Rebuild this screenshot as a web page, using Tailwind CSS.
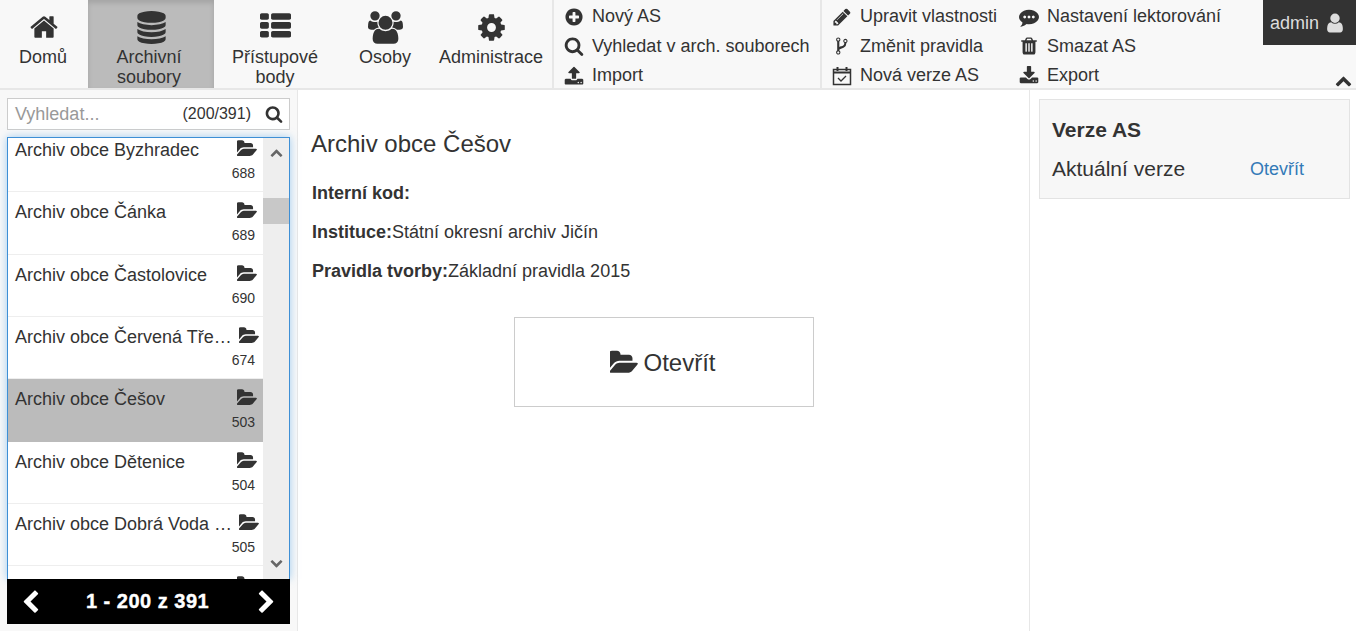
<!DOCTYPE html>
<html lang="cs"><head><meta charset="utf-8">
<script src="https://cdn.jsdelivr.net/npm/@tailwindcss/browser@4"></script>
<title>Archivní soubory</title></head>
<body class="h-[631px] w-[1356px] overflow-hidden bg-white font-['Liberation_Sans',Arial,sans-serif] text-[18px] text-[#333]">
<svg class="hidden">
<symbol id="home" viewBox="0 0 1792 1792"><path d="M1472 992v480q0 26-19 45t-45 19h-384v-384h-256v384h-384q-26 0-45-19t-19-45v-480q0-1 .5-3t.5-3l575-474 575 474q1 2 1 6zm223-69l-62 74q-8 9-21 11h-3q-13 0-21-7l-692-577-692 577q-12 8-24 7-13-2-21-11l-62-74q-8-10-7-23.500t11-21.500l719-599q32-26 76-26t76 26l244 204v-195q0-14 9-23t23-9h192q14 0 23 9t9 23v408l219 182q10 8 11 21.500t-7 23.500z"/></symbol>
<symbol id="database" viewBox="0 0 1792 1792"><path d="M896 768q237 0 443-43t325-127v170q0 69-103 128t-280 93.500-385 34.500-385-34.500-280-93.500-103-128v-170q119 84 325 127t443 43zm0 768q237 0 443-43t325-127v170q0 69-103 128t-280 93.500-385 34.500-385-34.500-280-93.500-103-128v-170q119 84 325 127t443 43zm0-384q237 0 443-43t325-127v170q0 69-103 128t-280 93.500-385 34.500-385-34.500-280-93.500-103-128v-170q119 84 325 127t443 43zm0-1152q208 0 385 34.500t280 93.500 103 128v128q0 69-103 128t-280 93.500-385 34.500-385-34.500-280-93.500-103-128v-128q0-69 103-128t280-93.500 385-34.500z"/></symbol>
<symbol id="thlist" viewBox="0 0 1792 1792"><path d="M512 1248v192q0 40-28 68t-68 28h-320q-40 0-68-28t-28-68v-192q0-40 28-68t68-28h320q40 0 68 28t28 68zm0-512v192q0 40-28 68t-68 28h-320q-40 0-68-28t-28-68v-192q0-40 28-68t68-28h320q40 0 68 28t28 68zm1280 512v192q0 40-28 68t-68 28h-960q-40 0-68-28t-28-68v-192q0-40 28-68t68-28h960q40 0 68 28t28 68zm-1280-1024v192q0 40-28 68t-68 28h-320q-40 0-68-28t-28-68v-192q0-40 28-68t68-28h320q40 0 68 28t28 68zm1280 512v192q0 40-28 68t-68 28h-960q-40 0-68-28t-28-68v-192q0-40 28-68t68-28h960q40 0 68 28t28 68zm0-512v192q0 40-28 68t-68 28h-960q-40 0-68-28t-28-68v-192q0-40 28-68t68-28h960q40 0 68 28t28 68z"/></symbol>
<symbol id="users" viewBox="0 0 1920 1792"><path d="M593 896q-162 5-265 128h-134q-82 0-138-40.500t-56-118.500q0-353 124-353 6 0 43.500 21t97.500 42.500 119 21.500q67 0 133-23-5 37-5 66 0 139 81 256zm1071 637q0 120-73 189.500t-194 69.500h-874q-121 0-194-69.500t-73-189.500q0-53 3.500-103.500t14-109 26.500-108.500 43-97.500 62-81 85.500-53.500 111.500-20q10 0 43 21.500t73 48 107 48 135 21.500 135-21.500 107-48 73-48 43-21.500q61 0 111.500 20t85.500 53.500 62 81 43 97.500 26.500 108.500 14 109 3.500 103.500zm-1024-1277q0 106-75 181t-181 75-181-75-75-181 75-181 181-75 181 75 75 181zm704 384q0 159-112.500 271.500t-271.500 112.500-271.500-112.500-112.500-271.500 112.500-271.500 271.500-112.500 271.500 112.500 112.500 271.500zm576 225q0 78-56 118.500t-138 40.500h-134q-103-123-265-128 81-117 81-256 0-29-5-66 66 23 133 23 59 0 119-21.500t97.500-42.500 43.500-21q124 0 124 353zm-128-609q0 106-75 181t-181 75-181-75-75-181 75-181 181-75 181 75 75 181z"/></symbol>
<symbol id="cog" viewBox="0 0 1792 1792"><path d="M1152 896q0-106-75-181t-181-75-181 75-75 181 75 181 181 75 181-75 75-181zm512-109v222q0 12-8 23t-20 13l-185 28q-19 54-39 91 35 50 107 138 10 12 10 25t-9 23q-27 37-99 108t-94 71q-12 0-26-9l-138-108q-44 23-91 38-16 136-29 186-7 28-36 28h-222q-14 0-24.500-8.500t-11.500-21.500l-28-184q-49-16-90-37l-141 107q-10 9-25 9-14 0-25-11-126-114-165-168-7-10-7-23 0-12 8-23 15-21 51-66.500t54-70.500q-27-50-41-99l-183-27q-13-2-21-12.500t-8-23.500v-222q0-12 8-23t19-13l186-28q14-46 39-92-40-57-107-138-10-12-10-24 0-10 9-23 26-36 98.500-107.500t94.500-71.500q13 0 26 10l138 107q44-23 91-38 16-136 29-186 7-28 36-28h222q14 0 24.500 8.500t11.500 21.500l28 184q49 16 90 37l142-107q9-9 24-9 13 0 25 10 129 119 165 170 7 8 7 22 0 12-8 23-15 21-51 66.500t-54 70.500q26 50 41 98l183 28q13 2 21 12.500t8 23.500z"/></symbol>
<symbol id="plus" viewBox="0 0 1792 1792"><path d="M1344 960v-128q0-26-19-45t-45-19h-256v-256q0-26-19-45t-45-19h-128q-26 0-45 19t-19 45v256h-256q-26 0-45 19t-19 45v128q0 26 19 45t45 19h256v256q0 26 19 45t45 19h128q26 0 45-19t19-45v-256h256q26 0 45-19t19-45zm320-64q0 209-103 385.500t-279.500 279.500-385.500 103-385.500-103-279.500-279.500-103-385.500 103-385.500 279.500-279.500 385.500-103 385.500 103 279.500 279.500 103 385.500z"/></symbol>
<symbol id="search" viewBox="0 0 1792 1792"><path d="M1216 832q0-185-131.500-316.500t-316.500-131.500-316.500 131.500-131.500 316.500 131.500 316.500 316.500 131.500 316.500-131.500 131.500-316.500zm512 832q0 52-38 90t-90 38q-54 0-90-38l-343-342q-179 124-399 124-143 0-273.500-55.500t-225-150-150-225-55.500-273.500 55.500-273.500 150-225 225-150 273.500-55.500 273.500 55.500 225 150 150 225 55.500 273.500q0 220-124 399l343 343q37 37 37 90z"/></symbol>
<symbol id="upload" viewBox="0 0 1792 1792"><path d="M1344 1472q0-26-19-45t-45-19-45 19-19 45 19 45 45 19 45-19 19-45zm256 0q0-26-19-45t-45-19-45 19-19 45 19 45 45 19 45-19 19-45zm128-224v320q0 40-28 68t-68 28h-1472q-40 0-68-28t-28-68v-320q0-40 28-68t68-28h427q21 56 70.500 92t110.500 36h256q61 0 110.500-36t70.500-92h427q40 0 68 28t28 68zm-325-648q-17 40-59 40h-256v448q0 26-19 45t-45 19h-256q-26 0-45-19t-19-45v-448h-256q-42 0-59-40-17-39 14-69l448-448q18-19 45-19t45 19l448 448q31 30 14 69z"/></symbol>
<symbol id="download" viewBox="0 0 1792 1792"><path d="M1344 1344q0-26-19-45t-45-19-45 19-19 45 19 45 45 19 45-19 19-45zm256 0q0-26-19-45t-45-19-45 19-19 45 19 45 45 19 45-19 19-45zm128-224v320q0 40-28 68t-68 28h-1472q-40 0-68-28t-28-68v-320q0-40 28-68t68-28h465l135 136q58 56 136 56t136-56l136-136h464q40 0 68 28t28 68zm-325-569q17 41-14 70l-448 448q-18 19-45 19t-45-19l-448-448q-31-29-14-70 17-39 59-39h256v-448q0-26 19-45t45-19h256q26 0 45 19t19 45v448h256q42 0 59 39z"/></symbol>
<symbol id="pencil" viewBox="0 0 1792 1792"><path d="M491 1536l91-91-235-235-91 91v107h128v128h107zm523-928q0-22-22-22-10 0-17 7l-542 542q-7 7-7 17 0 22 22 22 10 0 17-7l542-542q7-7 7-17zm-54-192l416 416-832 832h-416v-416zm683 96q0 53-37 90l-166 166-416-416 166-165q36-38 90-38 53 0 91 38l235 234q37 39 37 91z"/></symbol>
<symbol id="fork" viewBox="0 0 1408 1792"><path d="M464 1472q0-40-28-68t-68-28-68 28-28 68 28 68 68 28 68-28 28-68zm0-1152q0-40-28-68t-68-28-68 28-28 68 28 68 68 28 68-28 28-68zm640 128q0-40-28-68t-68-28-68 28-28 68 28 68 68 28 68-28 28-68zm96 0q0 52-26 96.500t-70 69.500q-2 287-226 414-67 38-203 81-128 40-169.500 71t-41.500 100v26q44 25 70 69.500t26 96.500q0 80-56 136t-136 56-136-56-56-136q0-52 26-96.500t70-69.500v-820q-44-25-70-69.500t-26-96.500q0-80 56-136t136-56 136 56 56 136q0 52-26 96.500t-70 69.500v497q54-26 154-57 55-17 87.500-29.500t70.500-31 59-39.500 40.500-51 28-69.500 8.500-91.500q-44-25-70-69.500t-26-96.500q0-80 56-136t136-56 136 56 56 136z"/></symbol>
<symbol id="comment" viewBox="0 0 1792 1792"><path d="M640 896q0-53-37.500-90.500t-90.500-37.500-90.500 37.500-37.500 90.500 37.500 90.500 90.500 37.500 90.500-37.500 37.500-90.500zm384 0q0-53-37.500-90.500t-90.500-37.500-90.500 37.500-37.500 90.500 37.500 90.500 90.500 37.500 90.500-37.500 37.500-90.500zm384 0q0-53-37.500-90.500t-90.500-37.500-90.500 37.500-37.500 90.500 37.500 90.500 90.500 37.500 90.500-37.500 37.500-90.500zm384 0q0 174-120 321.500t-326 233-450 85.500q-110 0-211-18-173 173-435 229-52 10-86 13-12 1-22-6t-13-18q-4-15 20-37 5-5 23.500-21.500t25.500-23.500 23.500-25.500 24-31.500 20.500-37 20-48 14.500-57.500 12.500-72.500q-146-90-229.500-216.500t-83.500-269.500q0-174 120-321.500t326-233 450-85.500 450 85.500 326 233 120 321.500z"/></symbol>
<symbol id="trash" viewBox="0 0 1792 1792"><path d="M704 1376v-704q0-14-9-23t-23-9h-64q-14 0-23 9t-9 23v704q0 14 9 23t23 9h64q14 0 23-9t9-23zm256 0v-704q0-14-9-23t-23-9h-64q-14 0-23 9t-9 23v704q0 14 9 23t23 9h64q14 0 23-9t9-23zm256 0v-704q0-14-9-23t-23-9h-64q-14 0-23 9t-9 23v704q0 14 9 23t23 9h64q14 0 23-9t9-23zm-544-992h448l-48-117q-7-9-17-11h-317q-10 2-17 11zm928 32v64q0 14-9 23t-23 9h-96v948q0 83-47 143.500t-113 60.500h-832q-66 0-113-58.500t-47-141.500v-952h-96q-14 0-23-9t-9-23v-64q0-14 9-23t23-9h309l70-167q15-37 54-63t79-26h320q40 0 79 26t54 63l70 167h309q14 0 23 9t9 23z"/></symbol>
<symbol id="user" viewBox="0 0 1792 1792"><path d="M1536 1399q0 109-62.500 187t-150.500 78h-854q-88 0-150.500-78t-62.500-187q0-85 8.500-160.500t31.500-152 58.500-131 94-89 134.500-34.500q131 128 313 128t313-128q76 0 134.500 34.500t94 89 58.500 131 31.500 152 8.500 160.500zm-256-887q0 159-112.500 271.500t-271.500 112.500-271.500-112.500-112.500-271.500 112.500-271.500 271.500-112.500 271.500 112.500 112.500 271.500z"/></symbol>
<symbol id="folder" viewBox="0 0 1792 1792"><path d="M1781 931q0 35-35 74l-336 396q-43 51-120.500 86.500t-143.500 35.500h-1088q-34 0-60.500-13t-26.500-43q0-35 35-74l336-396q43-51 120.500-86.500t143.500-35.500h1088q34 0 60.500 13t26.500 43zm-343-344v160h-832q-94 0-197 47.500t-164 119.500l-337 396-5 6q0-4-.5-12.500t-.500-12.500v-960q0-92 66-158t158-66h320q92 0 158 66t66 158v32h544q92 0 158 66t66 158z"/></symbol>
<symbol id="up" viewBox="0 0 1792 1792"><path d="M1683 1331l-166 165q-19 19-45 19t-45-19l-531-531-531 531q-19 19-45 19t-45-19l-166-165q-19-19-19-45.500t19-45.500l742-741q19-19 45-19t45 19l742 741q19 19 19 45.500t-19 45.500z"/></symbol>
<symbol id="left" viewBox="0 0 1792 1792"><path d="M1427 301l-531 531 531 531q19 19 19 45t-19 45l-166 166q-19 19-45 19t-45-19l-742-742q-19-19-19-45t19-45l742-742q19-19 45-19t45 19l166 166q19 19 19 45t-19 45z"/></symbol>
<symbol id="right" viewBox="0 0 1792 1792"><path d="M1363 877l-742 742q-19 19-45 19t-45-19l-166-166q-19-19-19-45t19-45l531-531-531-531q-19-19-19-45t19-45l166-166q19-19 45-19t45 19l742 742q19 19 19 45t-19 45z"/></symbol>
</svg>

<header class="relative flex h-[90px] border-b-2 border-[#e7e7e7] bg-[#f8f8f8]">
  <nav class="mr-[4px] flex h-[88px] text-center leading-[20px]">
    <a class="flex w-[88px] flex-col items-center pt-[12px]"><svg class="size-[30px] fill-[#333]"><use href="#home"/></svg><span class="mt-[5px] pr-[2px]">Domů</span></a>
    <a class="flex w-[126px] flex-col items-center bg-[#bbb] pt-[11px] shadow-[inset_0_3px_5px_rgba(0,0,0,0.125)]"><svg class="size-[33px] fill-[#333]"><use href="#database"/></svg><span class="mt-[3px] pr-[4px]">Archivní<br>soubory</span></a>
    <a class="flex w-[122px] flex-col items-center pt-[11px]"><svg class="size-[31px] fill-[#333]"><use href="#thlist"/></svg><span class="mt-[5px]">Přístupové<br>body</span></a>
    <a class="flex w-[98px] flex-col items-center pt-[11px]"><svg class="h-[33px] w-[35px] fill-[#333]"><use href="#users"/></svg><span class="mt-[3px]">Osoby</span></a>
    <a class="flex w-[114px] flex-col items-center pt-[12px]"><svg class="size-[31px] fill-[#333]"><use href="#cog"/></svg><span class="mt-[4px]">Administrace</span></a>
  </nav>
  <div class="flex h-[88px] w-[268px] flex-col border-l-2 border-[#e7e7e7] pl-[10px] pt-[2px] leading-[29.500px]">
    <a class="flex items-center gap-[8px]"><svg class="size-[20px] fill-[#333]"><use href="#plus"/></svg>Nový AS</a>
    <a class="flex items-center gap-[8px]"><svg class="size-[20px] fill-[#333]"><use href="#search"/></svg>Vyhledat v arch. souborech</a>
    <a class="flex items-center gap-[8px]"><svg class="size-[20px] fill-[#333]"><use href="#upload"/></svg>Import</a>
  </div>
  <div class="flex h-[88px] w-[199px] flex-col border-l-2 border-[#e7e7e7] pl-[10px] pt-[2px] leading-[29.500px]">
    <a class="flex items-center gap-[8px]"><svg class="size-[20px] fill-[#333]"><use href="#pencil"/></svg>Upravit vlastnosti</a>
    <a class="flex items-center gap-[8px]"><svg class="size-[20px] fill-[#333]"><use href="#fork"/></svg>Změnit pravidla</a>
    <a class="flex items-center gap-[8px]"><svg class="size-[20px] fill-none stroke-[#333]" viewBox="0 0 20 20"><rect x="1.500" y="3.500" width="17" height="15" stroke-width="1.500"/><path d="M1 6.500h18" stroke-width="2"/><path d="M5.500 1v4M14.500 1v4" stroke-width="2"/><path d="M6 12l3 3 5-5" stroke-width="1.300"/></svg>Nová verze AS</a>
  </div>
  <div class="flex h-[88px] flex-col pt-[2px] leading-[29.500px]">
    <a class="flex items-center gap-[8px]"><svg class="size-[20px] fill-[#333]"><use href="#comment"/></svg>Nastavení lektorování</a>
    <a class="flex items-center gap-[8px]"><svg class="size-[20px] fill-[#333]"><use href="#trash"/></svg>Smazat AS</a>
    <a class="flex items-center gap-[8px]"><svg class="size-[20px] fill-[#333]"><use href="#download"/></svg>Export</a>
  </div>
  <div class="absolute right-0 top-0 flex h-[45px] w-[93px] items-center gap-[5px] bg-[#333] pl-[7px] pt-[1px] text-[#ddd]">admin<svg class="size-[22px] fill-[#ddd]"><use href="#user"/></svg></div>
  <svg class="absolute right-[4px] top-[72px] size-[17px] fill-[#333]"><use href="#up"/></svg>
</header>

<main class="flex h-[541px]">
  <aside class="flex w-[298px] shrink-0 flex-col border-r border-[#e7e7e7] bg-[#f8f8f8] pl-[7px] pr-[7px] pt-[8px]">
    <div class="flex h-[32px] w-[283px] items-center border border-[#ccc] bg-white pl-[7px] pr-[6px]">
      <span class="grow text-[#999]">Vyhledat...</span><span class="text-[16px]">(200/391)</span>
      <svg class="ml-[14px] size-[18px] fill-[#333]"><use href="#search"/></svg>
    </div>
    <div class="mt-[7px] flex h-[442px] w-[283px] overflow-hidden border border-b-0 border-[#3e8fd5] shadow-[0_0_8px_rgba(102,175,233,0.6)]">
      <ul class="-mt-[8px] w-[255px] shrink-0 bg-white">
        <li class="h-[62.330px] border-b border-[#eee] px-[7px] pt-[9px]"><div class="flex justify-between leading-[22px]"><span class="whitespace-nowrap">Archiv obce Byzhradec</span><svg class="-mr-[1px] size-[20px] shrink-0 fill-[#333]"><use href="#folder"/></svg></div><div class="mt-[2px] pr-[1px] text-right text-[14px]">688</div></li>
        <li class="h-[62.330px] border-b border-[#eee] px-[7px] pt-[9px]"><div class="flex justify-between leading-[22px]"><span class="whitespace-nowrap">Archiv obce Čánka</span><svg class="-mr-[1px] size-[20px] shrink-0 fill-[#333]"><use href="#folder"/></svg></div><div class="mt-[2px] pr-[1px] text-right text-[14px]">689</div></li>
        <li class="h-[62.330px] border-b border-[#eee] px-[7px] pt-[9px]"><div class="flex justify-between leading-[22px]"><span class="whitespace-nowrap">Archiv obce Častolovice</span><svg class="-mr-[1px] size-[20px] shrink-0 fill-[#333]"><use href="#folder"/></svg></div><div class="mt-[2px] pr-[1px] text-right text-[14px]">690</div></li>
        <li class="h-[62.330px] border-b border-[#eee] px-[7px] pt-[9px]"><div class="flex justify-between leading-[22px]"><span class="whitespace-nowrap">Archiv obce Červená Tře…</span><svg class="-mr-[3px] size-[20px] shrink-0 fill-[#333]"><use href="#folder"/></svg></div><div class="mt-[2px] pr-[1px] text-right text-[14px]">674</div></li>
        <li class="h-[62.330px] border-b border-[#bbb] bg-[#bbb] px-[7px] pt-[9px]"><div class="flex justify-between leading-[22px]"><span class="whitespace-nowrap">Archiv obce Češov</span><svg class="-mr-[1px] size-[20px] shrink-0 fill-[#333]"><use href="#folder"/></svg></div><div class="mt-[2px] pr-[1px] text-right text-[14px]">503</div></li>
        <li class="h-[62.330px] border-b border-[#eee] px-[7px] pt-[9px]"><div class="flex justify-between leading-[22px]"><span class="whitespace-nowrap">Archiv obce Dětenice</span><svg class="-mr-[1px] size-[20px] shrink-0 fill-[#333]"><use href="#folder"/></svg></div><div class="mt-[2px] pr-[1px] text-right text-[14px]">504</div></li>
        <li class="h-[62.330px] border-b border-[#eee] px-[7px] pt-[9px]"><div class="flex justify-between leading-[22px]"><span class="whitespace-nowrap">Archiv obce Dobrá Voda …</span><svg class="-mr-[3px] size-[20px] shrink-0 fill-[#333]"><use href="#folder"/></svg></div><div class="mt-[2px] pr-[1px] text-right text-[14px]">505</div></li>
        <li class="h-[62.330px] px-[7px] pt-[9px]"><div class="flex justify-end"><svg class="-mr-[1px] size-[20px] shrink-0 fill-[#333]"><use href="#folder"/></svg></div></li>
      </ul>
      <div class="relative flex w-[26px] flex-col items-center justify-between bg-[#eee] py-[8px]">
        <svg class="size-[13px] fill-[#666]"><use href="#up"/></svg>
        <div class="absolute left-0 right-0 top-[60px] h-[26px] bg-[#c8c8c8]"></div>
        <svg class="size-[13px] rotate-180 fill-[#666]"><use href="#up"/></svg>
      </div>
    </div>
    <div class="flex h-[45px] w-[283px] items-center justify-between bg-black px-[11px] pt-[1px] text-white">
      <svg class="size-[25px] fill-white"><use href="#left"/></svg><span class="pb-[3px] pr-[2px] text-[20px] font-bold tracking-[0.5px] [-webkit-text-stroke:0.4px_white]">1 - 200 z 391</span><svg class="size-[25px] fill-white"><use href="#right"/></svg>
    </div>
  </aside>
  <section class="w-[732px] shrink-0 border-r border-[#e7e7e7] pl-[14px] pt-[40px]">
    <h1 class="-ml-[1px] text-[24px] leading-[28px]">Archiv obce Češov</h1>
    <p class="mt-[23px] leading-[24px]"><b>Interní kod:</b></p>
    <p class="mt-[15px] leading-[24px]"><b>Instituce:</b>Státní okresní archiv Jičín</p>
    <p class="mt-[15px] leading-[24px]"><b>Pravidla tvorby:</b>Základní pravidla 2015</p>
    <a class="ml-[202px] mt-[34px] flex h-[90px] w-[300px] items-center justify-center gap-[5px] border border-[#ccc] pr-[2px] pt-[1px] text-[24px]"><svg class="size-[28px] fill-[#333]"><use href="#folder"/></svg>Otevřít</a>
  </section>
  <aside class="grow pl-[9px] pr-[6px] pt-[9px]">
    <div class="h-[100px] border border-[#e3e3e3] bg-[#f7f7f7] px-[12px] pt-[18px]">
      <h2 class="text-[21px] font-bold leading-[24px]">Verze AS</h2>
      <div class="mt-[13px] flex items-center text-[21px] leading-[28px]"><span class="w-[198px]">Aktuální verze</span><a class="text-[18px] text-[#337ab7]">Otevřít</a></div>
    </div>
  </aside>
</main>
</body></html>
